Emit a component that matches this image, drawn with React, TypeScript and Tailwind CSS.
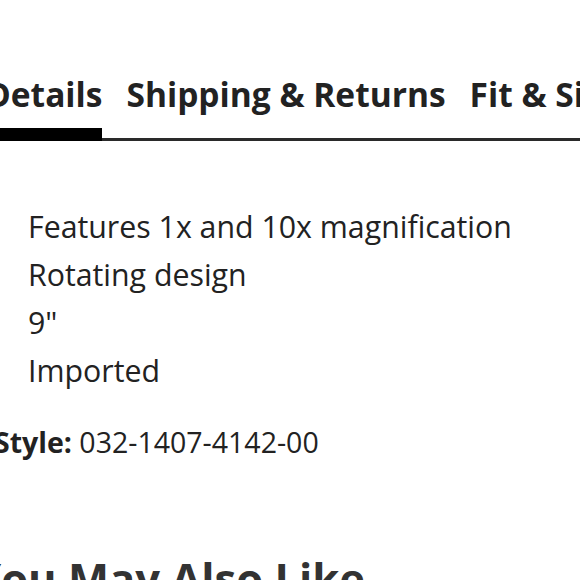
import React from 'react';

const tabs = ['Details', 'Shipping & Returns', 'Fit & Sizing'];
const features = ['Features 1x and 10x magnification', 'Rotating design', '9"', 'Imported'];

const App: React.FC = () => {
  return (
    <div className="w-[580px] h-[580px] overflow-hidden bg-white text-[#222] font-['Open_Sans',sans-serif]">
      <div className="pt-[74px] ml-[-14px] w-[720px]">
        <div className="flex gap-[24px] border-b-[3px] border-[#2a2a2a]">
          {tabs.map((t, i) => (
            <div
              key={t}
              className={`text-[33.5px] font-bold leading-[40px] whitespace-nowrap ${i === 0 ? 'pb-[14px] border-b-[13px] border-black mb-[-3px]' : 'pb-[24px]'}`}
            >
              {t}
            </div>
          ))}
        </div>
      </div>

      <ul className="mt-[62px] pl-[28px] flex flex-col">
        {features.map(f => (
          <li key={f} className="text-[30.3px] leading-[48px] whitespace-nowrap">{f}</li>
        ))}
      </ul>

      <p className="mt-[27px] ml-[-6px] text-[28.5px] leading-[40px] whitespace-nowrap">
        <span className="font-bold">Style:</span> 032-1407-4142-00
      </p>

      <h2 className="mt-[93px] ml-[-26px] text-[43.5px] font-bold leading-[48px] whitespace-nowrap text-[#333]">You May Also Like</h2>
    </div>
  );
};

export default App;
